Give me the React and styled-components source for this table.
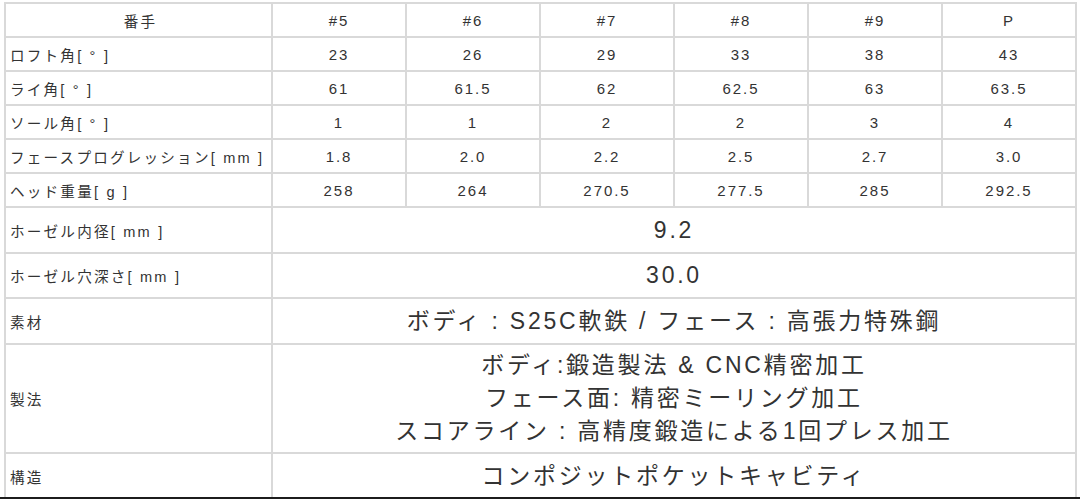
import React from "react"
import styled, { createGlobalStyle } from "styled-components"

const GlobalStyle = createGlobalStyle`
  html, body {
    margin: 0;
    padding: 0;
    background: #1c1c1c;
  }
`

const Page = styled.div`
  background: #ffffff;
  height: 497px;
  overflow: hidden;
  padding: 2px 4px 0 4px;
  box-sizing: border-box;
  font-family: "Liberation Sans", "Noto Sans CJK JP", sans-serif;
  color: #333333;
`

const SpecTable = styled.table`
  width: 1073px;
  border-collapse: collapse;
  table-layout: fixed;
  border: 2px solid #d9d9d9;
`

const Row = styled.tr`
  height: ${(p) => p.$h || 34}px;
`

const Label = styled.td`
  width: 261px;
  border: 2px solid #d9d9d9;
  padding: 0 0 ${(p) => p.$pb || 0}px 4px;
  font-size: 14.6px;
  letter-spacing: 0.15em;
  text-align: ${(p) => (p.$center ? "center" : "left")};
  vertical-align: middle;
  white-space: nowrap;
`

const Value = styled.td`
  border: 2px solid #d9d9d9;
  padding: 0;
  font-size: 15px;
  letter-spacing: 0.13em;
  text-align: center;
  vertical-align: middle;
  white-space: nowrap;
`

const BigValue = styled(Value)`
  font-size: 23px;
  letter-spacing: 0.12em;
  line-height: 33px;
  padding-bottom: ${(p) => p.$pb || 0}px;
`

const iron = ["#5", "#6", "#7", "#8", "#9", "P"]

const rows = [
  ["ロフト角[ ° ]", ["23", "26", "29", "33", "38", "43"]],
  ["ライ角[ ° ]", ["61", "61.5", "62", "62.5", "63", "63.5"]],
  ["ソール角[ ° ]", ["1", "1", "2", "2", "3", "4"]],
  ["フェースプログレッション[ mm ]", ["1.8", "2.0", "2.2", "2.5", "2.7", "3.0"]],
  ["ヘッド重量[ g ]", ["258", "264", "270.5", "277.5", "285", "292.5"]],
]

function App() {
  return (
    <Page>
      <GlobalStyle />
      <SpecTable>
        <tbody>
          <Row>
            <Label $center>番手</Label>
            {iron.map((n) => (
              <Value key={n}>{n}</Value>
            ))}
          </Row>
          {rows.map(([label, values]) => (
            <Row key={label}>
              <Label>{label}</Label>
              {values.map((v, i) => (
                <Value key={i}>{v}</Value>
              ))}
            </Row>
          ))}
          <Row $h={46}>
            <Label>ホーゼル内径[ mm ]</Label>
            <BigValue colSpan={6}>9.2</BigValue>
          </Row>
          <Row $h={45}>
            <Label>ホーゼル穴深さ[ mm ]</Label>
            <BigValue colSpan={6}>30.0</BigValue>
          </Row>
          <Row $h={46}>
            <Label>素材</Label>
            <BigValue colSpan={6}>ボディ : S25C軟鉄 / フェース : 高張力特殊鋼</BigValue>
          </Row>
          <Row $h={109}>
            <Label>製法</Label>
            <BigValue colSpan={6}>
              ボディ:鍛造製法 &amp; CNC精密加工
              <br />
              フェース面: 精密ミーリング加工
              <br />
              スコアライン : 高精度鍛造による1回プレス加工
            </BigValue>
          </Row>
          <Row $h={50}>
            <Label $pb={4}>構造</Label>
            <BigValue colSpan={6} $pb={4}>コンポジットポケットキャビティ</BigValue>
          </Row>
        </tbody>
      </SpecTable>
    </Page>
  )
}

export default App
